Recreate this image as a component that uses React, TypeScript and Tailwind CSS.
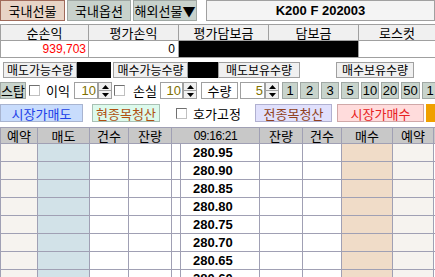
import React from "react";

const KR = { fontFamily: '"Noto Sans CJK KR", "Noto Sans", sans-serif' };
const NUM = { fontFamily: '"Liberation Sans", Arial, sans-serif' };

function Spinner() {
  return (
    <div className="flex h-[17px] w-[14px] shrink-0 flex-col border border-[#a0a0a0] bg-[#f0f0f0]">
      <div className="flex flex-1 items-center justify-center border-b border-[#a0a0a0]">
        <svg width="7" height="4" viewBox="0 0 7 4"><polygon points="0,4 7,4 3.5,0" fill="#000" /></svg>
      </div>
      <div className="flex flex-1 items-center justify-center">
        <svg width="7" height="4" viewBox="0 0 7 4"><polygon points="0,0 7,0 3.5,4" fill="#000" /></svg>
      </div>
    </div>
  );
}

function Check() {
  return <div className="h-[11px] w-[11px] shrink-0 border border-t-[#707070] border-l-[#707070] border-r-[#c0c0c0] border-b-[#c0c0c0] bg-white" />;
}

function NumInput({ w, v }: { w: string; v: string }) {
  return (
    <div className={`flex h-[17px] ${w} shrink-0 items-center justify-end border border-[#a0a0a0] bg-white pr-[1px] text-[13px] text-[#807000]`} style={NUM}>
      {v}
    </div>
  );
}

const prices = ["280.95", "280.90", "280.85", "280.80", "280.75", "280.70", "280.65", "280.60"];

export default function App() {
  return (
    <div className="relative h-[277px] w-[435px] overflow-hidden bg-white text-black" style={KR}>
      {/* Row 1 */}
      <div className="flex h-[21px] items-stretch">
        <div className="flex w-[65px] shrink-0 items-center justify-center border border-[#a06a5a] bg-[#e8d4c6] text-[13px] leading-none">국내선물</div>
        <div className="ml-[2px] flex w-[64px] shrink-0 items-center justify-center border border-[#a0a8a4] bg-[#c8d2cc] text-[13px] leading-none">국내옵션</div>
        <div className="ml-[2px] flex w-[64px] shrink-0 items-center justify-center border border-[#a0a8a4] bg-[#c8d2cc] text-[13px] leading-none">해외선물▼</div>
        <div className="ml-[9px] flex flex-1 items-center justify-center border border-[#a0a0a0] bg-[#f4f4f4] text-[13px] font-bold leading-none" style={NUM}>K200 F 202003</div>
      </div>

      {/* Row 2 */}
      <div className="mt-[3px] grid grid-cols-[87px_89px_89px_89px_1fr] gap-[1px] bg-[#a0a0a0] p-[1px] pr-0">
        <div className="flex h-[15px] items-center justify-center bg-[#f0f0f0] text-[13px] leading-none">순손익</div>
        <div className="flex h-[15px] items-center justify-center bg-[#f0f0f0] text-[13px] leading-none">평가손익</div>
        <div className="flex h-[15px] items-center justify-center bg-[#f0f0f0] text-[13px] leading-none">평가담보금</div>
        <div className="flex h-[15px] items-center justify-center bg-[#f0f0f0] text-[13px] leading-none">담보금</div>
        <div className="flex h-[15px] items-center justify-center bg-[#f0f0f0] text-[13px] leading-none">로스컷</div>
        <div className="flex h-[16px] items-center justify-end bg-white pr-[2px] text-[12px] leading-none text-[#ff0000]" style={NUM}>939,703</div>
        <div className="flex h-[16px] items-center justify-end bg-white pr-[3px] text-[12px] leading-none" style={NUM}>0</div>
        <div className="col-span-2 h-[16px] bg-black" />
        <div className="h-[16px] bg-white" />
      </div>

      {/* Row 3 */}
      <div className="mt-[4px] flex h-[16px] items-stretch">
        <div className="ml-[3px] flex w-[74px] shrink-0 items-center justify-center border border-[#a0a0a0] bg-[#f0f0f0] text-[12px] leading-none">매도가능수량</div>
        <div className="w-[34px] shrink-0 bg-black" />
        <div className="ml-[2px] flex w-[75px] shrink-0 items-center justify-center border border-[#a0a0a0] bg-[#f0f0f0] text-[12px] leading-none">매수가능수량</div>
        <div className="w-[30px] shrink-0 bg-black" />
        <div className="flex w-[82px] shrink-0 items-center justify-center border border-[#a0a0a0] bg-[#f0f0f0] text-[12px] leading-none">매도보유수량</div>
        <div className="w-[36px] shrink-0 bg-white" />
        <div className="flex w-[78px] shrink-0 items-center justify-center border border-[#a0a0a0] bg-[#f0f0f0] text-[12px] leading-none">매수보유수량</div>
      </div>

      {/* Row 4 */}
      <div className="mt-[4px] flex h-[17px] items-center">
        <div className="flex h-[17px] w-[26px] shrink-0 items-center justify-center border border-[#a0a8a4] bg-[#c8d4cc] text-[13px] leading-none">스탑</div>
        <div className="ml-[3px] shrink-0"><Check /></div>
        <div className="ml-[6px] w-[28px] shrink-0 text-[13px] leading-none">이익</div>
        <NumInput w="w-[24px]" v="10" />
        <Spinner />
        <div className="ml-[2px] shrink-0"><Check /></div>
        <div className="ml-[8px] w-[27px] shrink-0 text-[13px] leading-none">손실</div>
        <NumInput w="w-[23px]" v="10" />
        <Spinner />
        <div className="ml-[4px] flex h-[17px] w-[37px] shrink-0 items-center justify-center border border-[#a0a0a0] bg-white text-[13px] leading-none">수량</div>
        <div className="ml-[2px] shrink-0"><NumInput w="w-[25px]" v="5" /></div>
        <Spinner />
        <div className="ml-[3px] flex shrink-0 gap-[2px]">
          {[["1", "w-[16px]"], ["2", "w-[19px]"], ["3", "w-[18px]"], ["5", "w-[18px]"], ["10", "w-[18px]"], ["20", "w-[18px]"], ["50", "w-[19px]"], ["1", "w-[16px]"]].map(([t, w], i) => (
            <div key={i} className={`flex h-[17px] ${w} shrink-0 items-center justify-center border border-[#a0a8a4] bg-[#c8d4cc] text-[13px] leading-none`} style={NUM}>{t}</div>
          ))}
        </div>
      </div>

      {/* Row 5 */}
      <div className="mt-[5px] flex h-[18px] items-center">
        <div className="flex h-[18px] w-[83px] shrink-0 items-center justify-center border border-[#a8b4d0] bg-[#c8dcfc] text-[13px] leading-none text-[#2040e8]">시장가매도</div>
        <div className="ml-[9px] flex h-[18px] w-[68px] shrink-0 items-center justify-center border border-[#a8c0b4] bg-[#dcfaec] text-[13px] leading-none text-[#b05010]">현종목청산</div>
        <div className="ml-[16px] shrink-0"><Check /></div>
        <div className="ml-[6px] w-[62px] shrink-0 text-[13px] leading-none">호가고정</div>
        <div className="flex h-[18px] w-[77px] shrink-0 items-center justify-center border border-[#b0b0d0] bg-[#e0e0fc] text-[13px] leading-none text-[#904020]">전종목청산</div>
        <div className="ml-[5px] flex h-[18px] w-[87px] shrink-0 items-center justify-center border border-[#d0a8a8] bg-[#ffdcdc] text-[13px] leading-none text-[#e82020]">시장가매수</div>
        <div className="ml-[2px] h-[18px] flex-1 bg-[#f0a000]" />
      </div>

      {/* Table */}
      <div className="mt-[5px] grid grid-cols-[36px_51px_38px_42px_8px_78px_42px_38px_50px_40px_1fr] gap-[1px] bg-[#a0a0b4] pl-[1px] pt-[1px]">
        {["예약", "매도", "건수", "잔량"].map((t) => (
          <div key={t} className="flex h-[15px] items-center justify-center bg-[#c8c8c8] text-[13px] leading-none">{t}</div>
        ))}
        <div className="col-span-2 flex h-[15px] items-center justify-center bg-[#c8c8c8] text-[12px] leading-none tracking-[-0.4px]" style={NUM}>09:16:21</div>
        {["잔량", "건수", "매수", "예약"].map((t, i) => (
          <div key={i} className="flex h-[15px] items-center justify-center bg-[#c8c8c8] text-[13px] leading-none">{t}</div>
        ))}
        <div className="h-[15px] bg-[#c8c8c8]" />
        {prices.map((p) => (
          <React.Fragment key={p}>
            <div className="h-[17px] bg-[#f6f3ef]" />
            <div className="h-[17px] bg-[#d2e2e8]" />
            <div className="h-[17px] bg-white" />
            <div className="h-[17px] bg-white" />
            <div className="h-[17px] bg-white" />
            <div className="flex h-[17px] items-center bg-white pl-[12px] text-[13px] font-bold leading-none" style={NUM}>{p}</div>
            <div className="h-[17px] bg-white" />
            <div className="h-[17px] bg-white" />
            <div className="h-[17px] bg-[#f0dcc8]" />
            <div className="h-[17px] bg-[#f6f3ef]" />
            <div className="h-[17px] bg-white" />
          </React.Fragment>
        ))}
      </div>
    </div>
  );
}
